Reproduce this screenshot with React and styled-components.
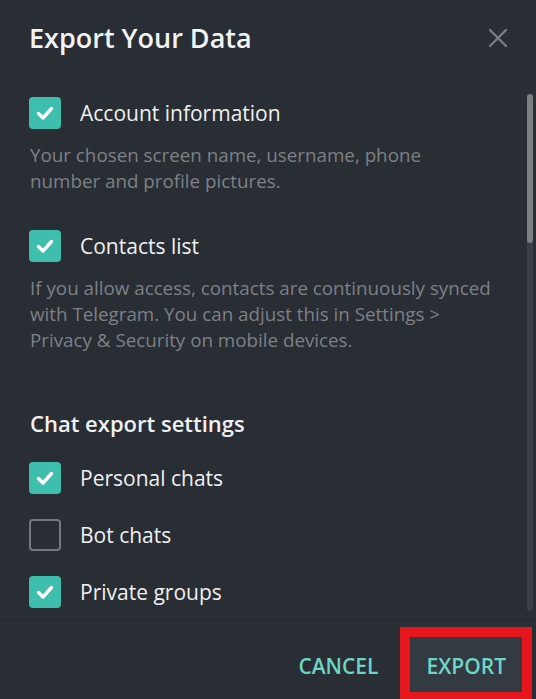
import React from "react";
import styled, { createGlobalStyle } from "styled-components";

const Global = createGlobalStyle`
  html, body { margin: 0; padding: 0; background: #292d34; }
  body { font-family: "Open Sans", "Noto Sans", sans-serif; }
  * { box-sizing: border-box; }
`;

const Dialog = styled.div`
  width: 536px;
  height: 699px;
  background: #292d34;
  display: flex;
  flex-direction: column;
  overflow: hidden;
`;

const Header = styled.div`
  height: 72px;
  flex: none;
  display: flex;
  align-items: flex-start;
  justify-content: space-between;
  padding: 22px 26px 0 29px;
`;

const Title = styled.h1`
  margin: 0;
  font-size: 27px;
  line-height: 32px;
  font-weight: 600;
  color: #f2f3f4;
`;

const CloseButton = styled.button`
  border: 0;
  background: none;
  padding: 0;
  margin-top: 4px;
  width: 24px;
  height: 24px;
  cursor: pointer;
  display: flex;
  align-items: center;
  justify-content: center;
`;

const ScrollArea = styled.div`
  flex: 1;
  position: relative;
  overflow: hidden;
`;

const Content = styled.div`
  padding: 25px 20px 0 29px;
  display: flex;
  flex-direction: column;
`;

const Row = styled.label`
  display: flex;
  align-items: center;
  height: 32px;
  gap: 19px;
  margin-top: ${(p) => p.$gap || 0}px;
`;

const Box = styled.span`
  width: 32px;
  height: 32px;
  border-radius: 4px;
  flex: none;
  display: flex;
  align-items: center;
  justify-content: center;
  background: ${(p) => (p.$checked ? "#3ebfad" : "transparent")};
  border: ${(p) => (p.$checked ? "none" : "2.5px solid #74777c")};
`;

const Label = styled.span`
  font-size: 21px;
  line-height: 28px;
  color: #eff0f1;
`;

const Description = styled.p`
  margin: 13px 0 0 1px;
  font-size: 18.8px;
  line-height: 26px;
  color: #7d8186;
  white-space: nowrap;
`;

const SectionTitle = styled.h2`
  margin: 56px 0 0 1px;
  font-size: 22px;
  line-height: 28px;
  font-weight: 600;
  color: #eff0f1;
`;

const Track = styled.div`
  position: absolute;
  right: 3px;
  top: 22px;
  bottom: 9px;
  width: 6px;
  border-radius: 3px;
  background: #3c4046;
`;

const Thumb = styled.div`
  height: 149px;
  border-radius: 3px;
  background: #7b7f84;
`;

const Footer = styled.div`
  height: 79px;
  flex: none;
  border-top: 1px solid #23272c;
  display: flex;
  justify-content: flex-end;
  align-items: flex-start;
  padding: 6px 4px 0 0;
  gap: 6px;
`;

const TextButton = styled.button`
  border: 0;
  background: ${(p) => (p.$filled ? "#333a41" : "transparent")};
  color: #6dd5c5;
  font-family: "Open Sans", "Noto Sans", sans-serif;
  font-size: 21px;
  font-weight: 600;
  height: 55px;
  padding: 2px 16px 0 16px;
  margin-top: ${(p) => (p.$filled ? 0 : 10)}px;
  cursor: pointer;
`;

const Highlight = styled.div`
  border: 10px solid #e5171d;
  display: flex;
`;

function Check({ checked }) {
  return (
    <Box $checked={checked}>
      {checked && (
        <svg width="32" height="32" viewBox="0 0 32 32">
          <polyline
            points="9.5,16.5 14,21 22.5,11.5"
            fill="none"
            stroke="#ffffff"
            strokeWidth="3.4"
            strokeLinecap="round"
            strokeLinejoin="round"
          />
        </svg>
      )}
    </Box>
  );
}

function Option({ checked, label, gap }) {
  return (
    <Row $gap={gap}>
      <Check checked={checked} />
      <Label>{label}</Label>
    </Row>
  );
}

export default function App() {
  return (
    <>
      <Global />
      <Dialog>
        <Header>
          <Title>Export Your Data</Title>
          <CloseButton aria-label="Close">
            <svg width="20" height="20" viewBox="0 0 20 20">
              <path
                d="M2 2 L18 18 M18 2 L2 18"
                stroke="#7a7d82"
                strokeWidth="2.4"
                strokeLinecap="round"
              />
            </svg>
          </CloseButton>
        </Header>
        <ScrollArea>
          <Content>
            <Option checked label="Account information" />
            <Description>
              Your chosen screen name, username, phone
              <br />
              number and profile pictures.
            </Description>
            <Option checked label="Contacts list" gap={36} />
            <Description>
              If you allow access, contacts are continuously synced
              <br />
              with Telegram. You can adjust this in Settings &gt;
              <br />
              Privacy &amp; Security on mobile devices.
            </Description>
            <SectionTitle>Chat export settings</SectionTitle>
            <Option checked label="Personal chats" gap={25} />
            <Option label="Bot chats" gap={25} />
            <Option checked label="Private groups" gap={25} />
          </Content>
          <Track>
            <Thumb />
          </Track>
        </ScrollArea>
        <Footer>
          <TextButton>CANCEL</TextButton>
          <Highlight>
            <TextButton $filled>EXPORT</TextButton>
          </Highlight>
        </Footer>
      </Dialog>
    </>
  );
}
